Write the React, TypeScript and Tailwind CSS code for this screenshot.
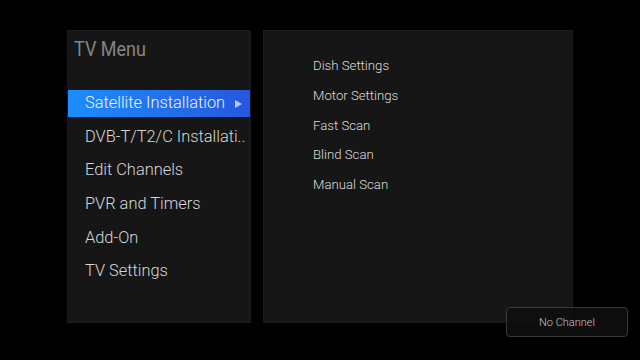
import React from "react";

const menu = [
  "Satellite Installation",
  "DVB-T/T2/C Installati..",
  "Edit Channels",
  "PVR and Timers",
  "Add-On",
  "TV Settings",
];

const sub = ["Dish Settings", "Motor Settings", "Fast Scan", "Blind Scan", "Manual Scan"];

export default function App() {
  return (
    <div
      className="relative w-[640px] h-[360px] bg-black overflow-hidden font-light"
      style={{ fontFamily: "Roboto, 'Noto Sans', sans-serif" }}
    >
      <div className="flex gap-[12px] pl-[67px] pt-[30px]">
        <div className="w-[184px] h-[293px] bg-[#161616] border border-[#1c1c1c] flex flex-col">
          <div className="pl-[6px] pt-[2px] h-[26px] leading-[26px] text-[18px] text-[#858585] mt-[1px] font-normal origin-top scale-y-[1.12]">
            TV Menu
          </div>
          <div className="mt-[32px] flex flex-col gap-[6.6px]">
            {menu.map((m, i) => (
              <div
                key={m}
                className={
                  i === 0
                    ? "h-[27px] flex items-center pl-[17px] pr-[8px] text-[16.4px] text-[#eef3ff] bg-gradient-to-r from-[#1b8dff] to-[#2656df]"
                    : "h-[27px] flex items-center pl-[17px] pr-[8px] text-[16.4px] text-[#d6d6d6]"
                }
              >
                <span className="flex-1 whitespace-nowrap">{m}</span>
                {i === 0 && (
                  <svg width="7" height="8" viewBox="0 0 7 8">
                    <polygon points="0,0 7,4 0,8" fill="#b8c8f0" />
                  </svg>
                )}
              </div>
            ))}
          </div>
        </div>
        <div className="w-[310px] h-[293px] bg-[#161616] border border-[#1c1c1c] pl-[49px] pt-[20px] flex flex-col">
          {sub.map((s) => (
            <div key={s} className="h-[29.75px] leading-[29.75px] text-[13.2px] text-[#dcdcdc] whitespace-nowrap">
              {s}
            </div>
          ))}
        </div>
      </div>
      <div className="absolute left-[506px] top-[307px] w-[122px] h-[30px] pt-[3px] rounded-[4px] border border-[#3a3a3a] bg-[#0e0e0e]/90 flex items-center justify-center text-[11px] text-[#c4c4c4]">
        No Channel
      </div>
    </div>
  );
}
